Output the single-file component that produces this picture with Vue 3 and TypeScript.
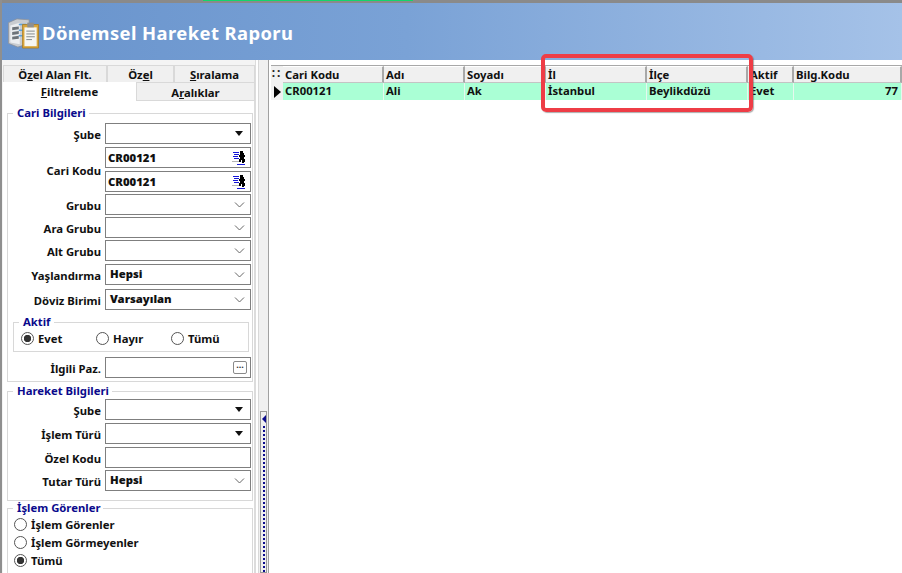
<script setup lang="ts">
interface Col { label: string; value: string; cls: string }
const cols: Col[] = [
  { label: 'Cari Kodu', value: 'CR00121', cls: 'c1' },
  { label: 'Adı', value: 'Ali', cls: 'c2' },
  { label: 'Soyadı', value: 'Ak', cls: 'c3' },
  { label: 'İl', value: 'İstanbul', cls: 'c4' },
  { label: 'İlçe', value: 'Beylikdüzü', cls: 'c5' },
  { label: 'Aktif', value: 'Evet', cls: 'c6' },
  { label: 'Bilg.Kodu', value: '77', cls: 'c7' },
]
</script>

<template>
  <div class="window">
    <div class="topline"><span class="greenbar"></span></div>
    <header class="banner">
      <svg class="logo" width="33" height="32" viewBox="0 0 34 34">
        <path d="M1 6l9-4 13 1v25l-12 4-10-4z" fill="#c9ccd0" stroke="#8d9298" stroke-width=".8" />
        <path d="M3 9l10-3v23l-10-2z" fill="#eceef0" />
        <path d="M5 11l7-1v3l-7 1zM5 16l7-1v3l-7 1zM5 21l7-1v3l-7 1z" fill="#6d7379" />
        <path d="M12 8h8M12 14h8M12 20h8" stroke="#5ca0d8" stroke-width="1.6" />
        <path d="M16 8h17v25H16z" fill="#d9a63c" stroke="#a87a1c" stroke-width=".8" />
        <path d="M18 11h13v20H18z" fill="#f6f6f2" />
        <path d="M21 6h7v5h-7z" fill="#8c8f92" />
        <path d="M20 15h9M20 18h9M20 21h9M20 24h6" stroke="#7f8488" stroke-width="1" />
      </svg>
      <h1>Dönemsel Hareket Raporu</h1>
    </header>
    <div class="content">
      <aside class="side">
        <div class="tabs top">
          <div class="tab t1"><span>Ö<u>z</u>el Alan Flt.</span></div>
          <div class="tab t2"><span>Öz<u>e</u>l</span></div>
          <div class="tab t3"><span><u>S</u>ıralama</span></div>
        </div>
        <div class="tabs second">
          <div class="tab active"><span><u>F</u>iltreleme</span></div>
          <div class="tab t4"><span>A<u>r</u>alıklar</span></div>
        </div>
        <div class="pane">
          <fieldset class="group cari">
            <legend>Cari Bilgileri</legend>
            <div class="row">
              <label>Şube</label>
              <div class="field"><svg class="solid" width="10" height="6" viewBox="0 0 10 6"><path d="M1 0h8L5 5z" /></svg></div>
            </div>
            <div class="row g3 tworow">
              <label>Cari Kodu</label>
              <div class="stack">
                <div class="field"><b>CR00121</b><svg class="pick" width="14" height="14" viewBox="0 0 14 14" shape-rendering="crispEdges"><path d="M1 1.5h6M2 3.5h5M1 5.5h5M2 7.5h5" stroke="#1515d8" stroke-width="1" /><path d="M0 10.5h7" stroke="#b5b5b5" stroke-width="1" /><path d="M8 0h3v2h1v2h1v2h-1v2h1v3h-1v1h-2v-3h-1v2H7V8h1V6H7V4h1z" fill="#000" /><path d="M5 13.5h8" stroke="#1515d8" stroke-width="1" /></svg></div>
                <div class="field"><b>CR00121</b><svg class="pick" width="14" height="14" viewBox="0 0 14 14" shape-rendering="crispEdges"><path d="M1 1.5h6M2 3.5h5M1 5.5h5M2 7.5h5" stroke="#1515d8" stroke-width="1" /><path d="M0 10.5h7" stroke="#b5b5b5" stroke-width="1" /><path d="M8 0h3v2h1v2h1v2h-1v2h1v3h-1v1h-2v-3h-1v2H7V8h1V6H7V4h1z" fill="#000" /><path d="M5 13.5h8" stroke="#1515d8" stroke-width="1" /></svg></div>
              </div>
            </div>
            <div class="row g2">
              <label>Grubu</label>
              <div class="field"><svg class="chev" width="11" height="6" viewBox="0 0 11 6"><path d="M1 .5l4.5 4.5L10 .5" /></svg></div>
            </div>
            <div class="row g2">
              <label>Ara Grubu</label>
              <div class="field"><svg class="chev" width="11" height="6" viewBox="0 0 11 6"><path d="M1 .5l4.5 4.5L10 .5" /></svg></div>
            </div>
            <div class="row g2">
              <label>Alt Grubu</label>
              <div class="field"><svg class="chev" width="11" height="6" viewBox="0 0 11 6"><path d="M1 .5l4.5 4.5L10 .5" /></svg></div>
            </div>
            <div class="row g3">
              <label>Yaşlandırma</label>
              <div class="field"><b class="sel">Hepsi</b><svg class="chev" width="11" height="6" viewBox="0 0 11 6"><path d="M1 .5l4.5 4.5L10 .5" /></svg></div>
            </div>
            <div class="row g4">
              <label>Döviz Birimi</label>
              <div class="field"><b class="sel">Varsayılan</b><svg class="chev" width="11" height="6" viewBox="0 0 11 6"><path d="M1 .5l4.5 4.5L10 .5" /></svg></div>
            </div>
            <fieldset class="group aktif">
              <legend>Aktif</legend>
              <div class="radios">
                <span class="radio on">Evet</span>
                <span class="radio">Hayır</span>
                <span class="radio">Tümü</span>
              </div>
            </fieldset>
            <div class="row paz">
              <label>İlgili Paz.</label>
              <div class="field"><span class="dots">...</span></div>
            </div>
          </fieldset>
          <fieldset class="group hareket">
            <legend>Hareket Bilgileri</legend>
            <div class="row">
              <label>Şube</label>
              <div class="field"><svg class="solid" width="10" height="6" viewBox="0 0 10 6"><path d="M1 0h8L5 5z" /></svg></div>
            </div>
            <div class="row g3">
              <label>İşlem Türü</label>
              <div class="field"><svg class="solid" width="10" height="6" viewBox="0 0 10 6"><path d="M1 0h8L5 5z" /></svg></div>
            </div>
            <div class="row g3">
              <label>Özel Kodu</label>
              <div class="field"></div>
            </div>
            <div class="row g2">
              <label>Tutar Türü</label>
              <div class="field"><b class="sel">Hepsi</b><svg class="chev" width="11" height="6" viewBox="0 0 11 6"><path d="M1 .5l4.5 4.5L10 .5" /></svg></div>
            </div>
          </fieldset>
          <fieldset class="group gorenler">
            <legend>İşlem Görenler</legend>
            <span class="radio">İşlem Görenler</span>
            <span class="radio">İşlem Görmeyenler</span>
            <span class="radio on">Tümü</span>
          </fieldset>
        </div>
      </aside>
      <div class="splitter">
        <div class="handle"><span class="arrow"></span><span class="dotline"></span></div>
      </div>
      <main class="grid">
        <div class="grow head">
          <div class="ind dots2">::</div>
          <div v-for="c in cols" :key="c.label" class="hcell" :class="c.cls">{{ c.label }}</div>
        </div>
        <div class="grow data">
          <div class="ind arrowcell"><span class="tri"></span></div>
          <div v-for="c in cols" :key="c.label" class="dcell" :class="c.cls">{{ c.value }}</div>
        </div>
        <div class="highlight"></div>
      </main>
    </div>
  </div>
</template>

<style>
html, body { margin: 0; overflow: hidden; background: #fff; }
</style>

<style scoped>
.window {
  width: 902px; height: 573px; overflow: hidden; display: flex; flex-direction: column;
  font: bold 11.3px "Noto Sans", sans-serif; color: #111; background: #fff; box-sizing: border-box;
  border-left: 2px solid #8f8f8f;
}
.topline { height: 3px; background: #8a8a8a; flex: none; margin-left: -2px; display: flex; }
.greenbar { width: 210px; height: 1px; margin-left: 203px; background: #12d66c; }
.banner {
  height: 57px; flex: none; display: flex; align-items: center; gap: 2px; padding: 0 0 0 5px;
  background: linear-gradient(90deg, #6893cc 0%, #7aa2d6 45%, #a5c2e8 100%);
  box-sizing: border-box;
}
.logo { flex: none; margin-top: 3px; }
h1 {
  margin: 0; color: #fff; font: bold 18.4px "Noto Sans", sans-serif; letter-spacing: .42px;
  line-height: 24px; margin-top: 3px;
}
.content { flex: 1; display: flex; min-height: 0; }
.side { width: 254px; flex: none; padding-top: 5px; padding-left: 1px; box-sizing: border-box; border-right: 1px solid #dcdcdc; background: #f4f4f4; }
.tabs { display: flex; width: 252px; }
.tabs.top { height: 17px; }
.tabs.second { height: 19px; }
.tab {
  box-sizing: border-box; background: #f0f0f0; border: 1px solid #d9d9d9; border-bottom: 0;
  display: flex; align-items: center; justify-content: center;
}
.t1 { width: 104px; } .t2 { width: 67px; } .t3 { width: 81px; }
.active { width: 133px; background: #fff; border-color: #fff; height: 19px; padding-bottom: 2px; }
.t4 { width: 119px; border-bottom: 1px solid #d9d9d9; padding-top: 1px; }
.pane { background: #fff; width: 252px; height: 472px; box-sizing: border-box; padding: 5px 0 0 4px; overflow: hidden; border-right: 1px solid #dcdcdc; }
.group {
  margin: 0; padding: 0; border: 1px solid #d8d8d8; width: 246px; box-sizing: border-box; min-inline-size: 0;
}
.group legend { margin-left: 5px; padding: 0 3px 0 4px; color: #0a0a8c; line-height: 14px; }
.cari { height: 276px; padding-top: 3px; }
.hareket { height: 117px; margin-top: 2px; padding-top: 1px; }
.gorenler { height: 90px; margin-top: 0; padding-left: 6px; display: flex; flex-direction: column; }
.gorenler legend { margin-left: -1px; }
.row { display: flex; align-items: center; height: 21px; }
.row.g2 { margin-top: 2px; } .row.g3 { margin-top: 3px; } .row.g4 { margin-top: 4px; }
.row label { width: 97px; padding: 2px 4px 0 0; box-sizing: border-box; text-align: right; flex: none; }
.row.tworow { height: 45px; }
.stack { display: flex; flex-direction: column; gap: 3px; }
.field {
  position: relative; width: 146px; height: 21px; box-sizing: border-box; border: 1px solid #7f7f7f; background: #fff;
  display: flex; align-items: center; justify-content: space-between; padding: 0 5px 0 2px;
}
.sel { margin-left: 2px; margin-top: -2px; }
.solid { margin-left: auto; margin-right: 1px; fill: #111; }
.chev { margin-left: auto; fill: none; stroke: #666; stroke-width: 1; }
.pick { margin-left: auto; margin-right: -1px; }
.dots {
  margin-left: auto; width: 12px; height: 11px; border: 1px solid #8a8a8a; border-radius: 2px; margin-right: -2px;
  font-size: 9px; line-height: 6px; text-align: center; color: #333;
}
.aktif { width: 236px; height: 37px; margin: 5px 0 0 5px; }
.aktif legend { margin-left: 5px; padding: 0 4px; }
.radios { display: flex; padding-left: 7px; }
.radios .radio { width: 75px; }
.radio { display: flex; align-items: center; gap: 4px; height: 18px; }
.radio::before {
  content: ""; width: 11px; height: 11px; border: 1px solid #555; border-radius: 50%; flex: none; background: #fff;
}
.radio.on::before { background: radial-gradient(circle, #333 0 3.4px, #fff 4px); }
.row.paz { margin-top: 5px; }
.splitter { width: 11px; flex: none; margin-left: 2px; background: #f0f0f0; border-left: 1px solid #d8d8d8; border-right: 1px solid #a0a0a0; box-sizing: border-box; }
.handle { margin: 351px 0 0 1px; width: 7px; height: 162px; box-sizing: border-box; border: 1px solid #999; display: flex; flex-direction: column; align-items: center; padding-top: 3px; }
.arrow { width: 0; height: 0; border: 4px solid transparent; border-right-color: #0a0a8c; border-left: 0; }
.dotline { flex: 1; margin-top: 3px; border-left: 2px dotted #0a0a8c; }
.grid { flex: 1; position: relative; min-width: 0; padding: 5px 0 0 2px; background: #fff; }
.grow { display: flex; }
.head { height: 17px; border-top: 1px solid #a8a8a8; }
.data { height: 17px; }
.ind { width: 12px; flex: none; background: #f0f0f0; text-align: center; line-height: 14px; color: #222; }
.dots2 { font-size: 12px; letter-spacing: 2px; }
.arrowcell { display: flex; align-items: center; justify-content: center; }
.tri { width: 0; height: 0; border-left: 7px solid #000; border-top: 6px solid transparent; border-bottom: 6px solid transparent; }
.hcell { background: #f0f0f0; padding-left: 2px; box-sizing: border-box; line-height: 15px; border-right: 2px solid #a8a8a8; border-bottom: 1px solid #c4c4c4; border-top: 1px solid #fff; }
.dcell { background: #aaffd5; padding-left: 2px; box-sizing: border-box; line-height: 16px; border-right: 1px solid #e6f8ee; }
.c1 { width: 101px; } .c2 { width: 81px; } .c3 { width: 81px; } .c4 { width: 101px; } .c5 { width: 101px; } .c6 { width: 46px; }
.c7 { flex: 1; }
.dcell.c7 { text-align: right; padding-right: 3px; }
.highlight {
  position: absolute; left: 272px; top: -6px; width: 212px; height: 58px; box-sizing: border-box;
  border: 4px solid #ee3d46; border-radius: 5px; box-shadow: 1px 1px 1px rgba(90,90,90,.5);
}
</style>
